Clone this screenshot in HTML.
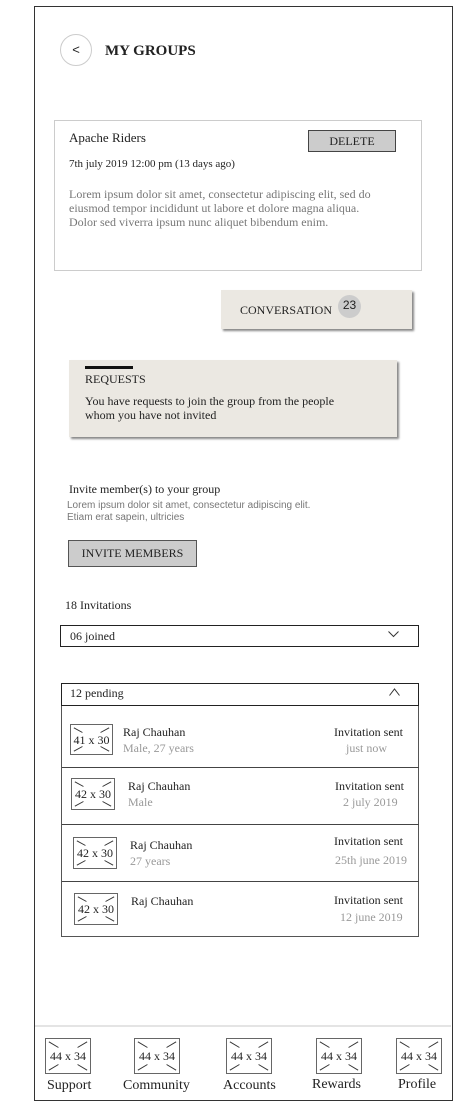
<!DOCTYPE html>
<html><head><meta charset="utf-8">
<style>
*{margin:0;padding:0;box-sizing:border-box}
body{width:457px;height:1111px;background:#fff;position:relative;font-family:"Liberation Serif",serif;color:#222;overflow:hidden}
.a{position:absolute}
.ph{position:absolute;border:1.5px solid #666;background:#fff}
.ph svg{position:absolute;left:0;top:0;width:100%;height:100%}
.ph span{position:absolute;left:0;right:0;top:50%;transform:translateY(-50%);text-align:center;font-size:12px;color:#222;line-height:1}
.g{color:#999}
.row{position:absolute;left:62px;width:357px;border-top:1.5px solid #444}
</style></head><body>
<div class="a" style="left:34px;top:6px;width:419px;height:1095px;border:1.5px solid #333"></div>
<div class="a" style="left:35px;top:1025px;width:416px;height:2px;background:#e4e4e4"></div>

<div class="a" style="left:60px;top:34px;width:32px;height:32px;border:1.5px solid #ccc;border-radius:50%;text-align:center;line-height:29px;font-size:13px;font-family:'Liberation Sans',sans-serif">&lt;</div>
<div class="a" style="left:105px;top:43px;font-size:15px;font-weight:bold">MY GROUPS</div>

<div class="a" style="left:54px;top:120px;width:368px;height:151px;border:1px solid #ccc"></div>
<div class="a" style="left:69px;top:130px;font-size:13px">Apache Riders</div>
<div class="a" style="left:308px;top:130px;width:88px;height:22px;background:#ccc;border:1.5px solid #444;font-size:12px;text-align:center;line-height:20px">DELETE</div>
<div class="a" style="left:69px;top:158px;font-size:11px">7th july 2019 12:00 pm (13 days ago)</div>
<div class="a" style="left:69px;top:187px;font-size:12px;line-height:14px;color:#777">Lorem ipsum dolor sit amet, consectetur adipiscing elit, sed do<br>eiusmod tempor incididunt ut labore et dolore magna aliqua.<br>Dolor sed viverra ipsum nunc aliquet bibendum enim.</div>

<div class="a" style="left:221px;top:290px;width:191px;height:39px;background:#ebe8e2;box-shadow:2px 2px 2px #888"></div>
<div class="a" style="left:240px;top:303px;font-size:12px">CONVERSATION</div>
<div class="a" style="left:338px;top:295px;width:23px;height:23px;border-radius:50%;background:#ccc;font-family:'Liberation Sans',sans-serif;font-size:12px;text-align:center;line-height:21px">23</div>

<div class="a" style="left:69px;top:360px;width:328px;height:77px;background:#ebe8e2;box-shadow:2px 2px 2px #888"></div>
<div class="a" style="left:85px;top:366px;width:48px;height:3px;background:#111"></div>
<div class="a" style="left:85px;top:372px;font-size:12px">REQUESTS</div>
<div class="a" style="left:85px;top:394px;font-size:12px;line-height:14px">You have requests to join the group from the people<br>whom you have not invited</div>

<div class="a" style="left:69px;top:482px;font-size:12px">Invite member(s) to your group</div>
<div class="a" style="left:67px;top:500px;font-size:10px;line-height:12px;color:#777;font-family:'Liberation Sans',sans-serif">Lorem ipsum dolor sit amet, consectetur adipiscing elit.<br>Etiam erat sapein, ultricies</div>
<div class="a" style="left:68px;top:540px;width:129px;height:27px;background:#ccc;border:1.5px solid #555;font-size:12px;text-align:center;line-height:25px">INVITE MEMBERS</div>

<div class="a" style="left:65px;top:598px;font-size:12px">18 Invitations</div>
<div class="a" style="left:60px;top:625px;width:359px;height:22px;border:1.5px solid #222"></div>
<div class="a" style="left:70px;top:629px;font-size:12px">06 joined</div>
<svg class="a" style="left:388px;top:631px" width="11" height="7" viewBox="0 0 11 7"><path d="M0.5 0.5L5.5 5.5L10.5 0.5" fill="none" stroke="#333" stroke-width="1"/></svg>

<div class="a" style="left:61px;top:683px;width:358px;height:254px;border:1.5px solid #555"></div>
<div class="a" style="left:61px;top:683px;width:358px;height:23px;border:1.5px solid #222"></div>
<div class="a" style="left:70px;top:686px;font-size:12px">12 pending</div>
<svg class="a" style="left:389px;top:688px" width="11" height="8" viewBox="0 0 11 8"><path d="M0.5 7.5L5.5 1L10.5 7.5" fill="none" stroke="#333" stroke-width="1"/></svg>

<div class="row" style="top:767px"></div>
<div class="row" style="top:824px"></div>
<div class="row" style="top:881px"></div>

<div class="ph" style="left:70px;top:724px;width:43px;height:31px"><svg viewBox="0 0 43 31" preserveAspectRatio="none"><path d="M3 3L12 8M40 3L31 8M3 28L12 23M40 28L31 23" stroke="#333" stroke-width="1"/></svg><span>41 x 30</span></div>
<div class="a" style="left:123px;top:725px;font-size:12px">Raj Chauhan</div>
<div class="a g" style="left:123px;top:741px;font-size:12px">Male, 27 years</div>
<div class="a" style="left:334px;top:725px;font-size:12px">Invitation sent</div>
<div class="a g" style="left:346px;top:741px;font-size:12px">just now</div>

<div class="ph" style="left:71px;top:778px;width:44px;height:32px"><svg viewBox="0 0 44 32" preserveAspectRatio="none"><path d="M3 3L12 8M41 3L32 8M3 29L12 24M41 29L32 24" stroke="#333" stroke-width="1"/></svg><span>42 x 30</span></div>
<div class="a" style="left:128px;top:779px;font-size:12px">Raj Chauhan</div>
<div class="a g" style="left:128px;top:795px;font-size:12px">Male</div>
<div class="a" style="left:335px;top:779px;font-size:12px">Invitation sent</div>
<div class="a g" style="left:343px;top:795px;font-size:12px">2 july 2019</div>

<div class="ph" style="left:73px;top:837px;width:44px;height:32px"><svg viewBox="0 0 44 32" preserveAspectRatio="none"><path d="M3 3L12 8M41 3L32 8M3 29L12 24M41 29L32 24" stroke="#333" stroke-width="1"/></svg><span>42 x 30</span></div>
<div class="a" style="left:130px;top:838px;font-size:12px">Raj Chauhan</div>
<div class="a g" style="left:130px;top:854px;font-size:12px">27 years</div>
<div class="a" style="left:334px;top:834px;font-size:12px">Invitation sent</div>
<div class="a g" style="left:335px;top:853px;font-size:12px">25th june 2019</div>

<div class="ph" style="left:74px;top:893px;width:44px;height:32px"><svg viewBox="0 0 44 32" preserveAspectRatio="none"><path d="M3 3L12 8M41 3L32 8M3 29L12 24M41 29L32 24" stroke="#333" stroke-width="1"/></svg><span>42 x 30</span></div>
<div class="a" style="left:131px;top:894px;font-size:12px">Raj Chauhan</div>
<div class="a" style="left:334px;top:893px;font-size:12px">Invitation sent</div>
<div class="a g" style="left:340px;top:910px;font-size:12px">12 june 2019</div>

<div class="ph" style="left:45px;top:1038px;width:46px;height:36px"><svg viewBox="0 0 46 36" preserveAspectRatio="none"><path d="M3 3L13 9M43 3L33 9M3 33L13 27M43 33L33 27" stroke="#333" stroke-width="1"/></svg><span>44 x 34</span></div>
<div class="ph" style="left:134px;top:1038px;width:46px;height:36px"><svg viewBox="0 0 46 36" preserveAspectRatio="none"><path d="M3 3L13 9M43 3L33 9M3 33L13 27M43 33L33 27" stroke="#333" stroke-width="1"/></svg><span>44 x 34</span></div>
<div class="ph" style="left:226px;top:1038px;width:46px;height:36px"><svg viewBox="0 0 46 36" preserveAspectRatio="none"><path d="M3 3L13 9M43 3L33 9M3 33L13 27M43 33L33 27" stroke="#333" stroke-width="1"/></svg><span>44 x 34</span></div>
<div class="ph" style="left:316px;top:1038px;width:46px;height:36px"><svg viewBox="0 0 46 36" preserveAspectRatio="none"><path d="M3 3L13 9M43 3L33 9M3 33L13 27M43 33L33 27" stroke="#333" stroke-width="1"/></svg><span>44 x 34</span></div>
<div class="ph" style="left:396px;top:1038px;width:46px;height:36px"><svg viewBox="0 0 46 36" preserveAspectRatio="none"><path d="M3 3L13 9M43 3L33 9M3 33L13 27M43 33L33 27" stroke="#333" stroke-width="1"/></svg><span>44 x 34</span></div>
<div class="a" style="left:47px;top:1078px;font-size:14px">Support</div>
<div class="a" style="left:123px;top:1078px;font-size:14px">Community</div>
<div class="a" style="left:223px;top:1078px;font-size:14px">Accounts</div>
<div class="a" style="left:312px;top:1077px;font-size:14px">Rewards</div>
<div class="a" style="left:398px;top:1077px;font-size:14px">Profile</div>
</body></html>
